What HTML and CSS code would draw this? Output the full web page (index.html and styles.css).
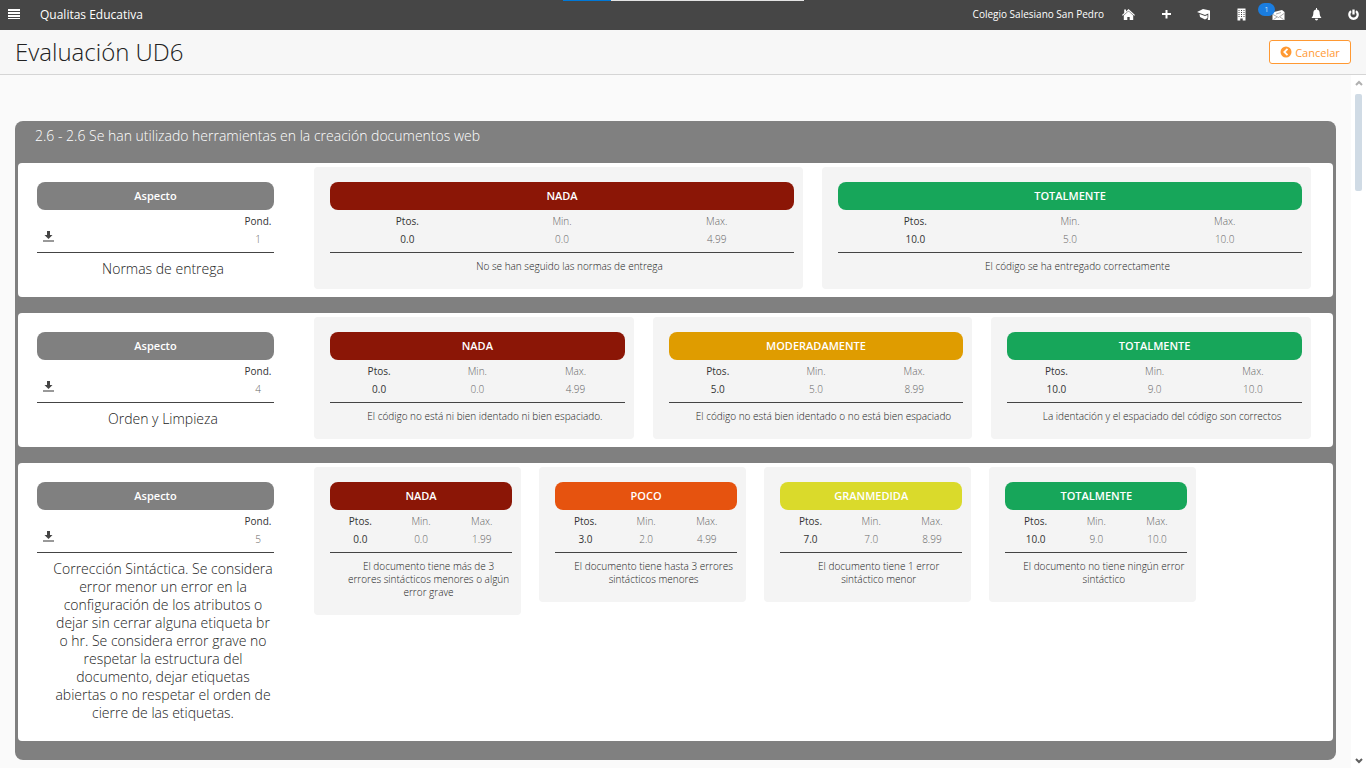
FILE: index.html
```html
<!DOCTYPE html>
<html lang="es">
<head>
<meta charset="utf-8">
<title>Evaluación UD6</title>
<link rel="stylesheet" href="styles.css">
</head>
<body>
<header class="topbar">
  <div class="loading"></div>
  <button class="icon-btn menu" aria-label="Menú"><svg viewBox="0 0 12 12"><path d="M0 1h12v2H0zM0 4h12v2H0zM0 7h12v2H0zM0 10h12v1H0z"/></svg></button>
  <span class="brand">Qualitas Educativa</span>
  <span class="school">Colegio Salesiano San Pedro</span>
  <nav class="tools">
    <button class="icon-btn" aria-label="Inicio"><svg viewBox="0 0 13 13"><path d="M6.500 1 13 7l-.8.8L6.500 2.700.8 7.800 0 7l2.200-2V1.600h1.800v1.800zM6.500 3.300l4.700 4.200V12H7.700V9H5.300v3H1.800V7.500z"/></svg></button>
    <button class="icon-btn" aria-label="Añadir"><svg viewBox="0 0 13 13"><path d="M5.500 2h2v3H11v2H7.500v3.500h-2V7H2V5h3.500z"/></svg></button>
    <button class="icon-btn" aria-label="Cursos"><svg viewBox="0 0 13 13"><path d="M0 4 6 1l7 1.500V9l.3 3h-2.600l.6-3V5.500L8 7zM2.500 6l5.500 2 2.500-1v3L8 11.500 3 9z"/></svg></button>
    <button class="icon-btn" aria-label="Centro"><svg viewBox="0 0 13 13"><path fill-rule="evenodd" d="M2.500.5h8v12H7.700v-2H5.300v2H2.500zM3.500 2v1h1V2zM6 2v1h1V2zM8.500 2v1h1V2zM3.500 4v1h1V4zM6 4v1h1V4zM8.500 4v1h1V4zM3.500 6v1h1V6zM6 6v1h1V6zM8.500 6v1h1V6zM3.500 8v1h1V8zM6 8v1h1V8zM8.500 8v1h1V8z"/></svg></button>
    <button class="icon-btn" aria-label="Mensajes"><svg viewBox="0 0 13 13"><path d="M.5 6 2 4l8-2 2.500 2v8H.5z"/><path d="m1 6.500 5.500 3L12 5.500M1.500 11.500 5 9m6.500 2.500L8 9M4 6l5-1.500" fill="none" stroke="#888" stroke-width=".7"/></svg><span class="badge">1</span></button>
    <button class="icon-btn" aria-label="Avisos"><svg viewBox="0 0 13 13"><path d="M6 0h1v1.500c2 .4 2.700 1.800 2.700 4 0 2 .8 3 1.800 4.500h-10c1-1.500 1.800-2.500 1.800-4.500 0-2.200.7-3.600 2.700-4zM5 10.700h3c0 1-.6 1.700-1.500 1.700S5 11.700 5 10.700z"/></svg></button>
    <button class="icon-btn" aria-label="Salir"><svg viewBox="0 0 13 13"><path d="M4 3.200a4.200 4.200 0 1 0 5 0M6.500 1.500v5" fill="none" stroke="#fff" stroke-width="2.300"/></svg></button>
  </nav>
</header>
<div class="titlebar">
  <h1>Evaluación UD6</h1>
  <button class="cancel"><svg viewBox="0 0 12 12"><circle cx="6" cy="6" r="5.500" fill="#ff9933"/><path d="M7.500 2.800 4.300 6l3.200 3.200" fill="none" stroke="#fff" stroke-width="1.800"/></svg>Cancelar</button>
</div>
<div class="viewport">
  <main>
    <section class="panel">
      <h2>2.6 - 2.6 Se han utilizado herramientas en la creación documentos web</h2>

      <article class="row">
        <div class="aspect">
          <div class="pill">Aspecto</div>
          <div class="weight"><button class="download" aria-label="Descargar"><svg viewBox="0 0 11 11"><path d="M4 0h3v4h2.500l-4 4-4-4H4z" fill="#444"/><path d="M0 9h11v2H0z" fill="#999"/></svg></button><dl><dt>Pond.</dt><dd>1</dd></dl></div>
          <p>Normas de entrega</p>
        </div>
        <div class="levels two">
          <div class="card"><div class="pill red">NADA</div>
            <div class="scores"><dl class="pts"><dt>Ptos.</dt><dd>0.0</dd></dl><dl><dt>Min.</dt><dd>0.0</dd></dl><dl><dt>Max.</dt><dd>4.99</dd></dl></div>
            <p>No se han seguido las normas de entrega</p></div>
          <div class="card"><div class="pill green">TOTALMENTE</div>
            <div class="scores"><dl class="pts"><dt>Ptos.</dt><dd>10.0</dd></dl><dl><dt>Min.</dt><dd>5.0</dd></dl><dl><dt>Max.</dt><dd>10.0</dd></dl></div>
            <p>El código se ha entregado correctamente</p></div>
        </div>
      </article>

      <article class="row">
        <div class="aspect">
          <div class="pill">Aspecto</div>
          <div class="weight"><button class="download" aria-label="Descargar"><svg viewBox="0 0 11 11"><path d="M4 0h3v4h2.500l-4 4-4-4H4z" fill="#444"/><path d="M0 9h11v2H0z" fill="#999"/></svg></button><dl><dt>Pond.</dt><dd>4</dd></dl></div>
          <p>Orden y Limpieza</p>
        </div>
        <div class="levels three">
          <div class="card"><div class="pill red">NADA</div>
            <div class="scores"><dl class="pts"><dt>Ptos.</dt><dd>0.0</dd></dl><dl><dt>Min.</dt><dd>0.0</dd></dl><dl><dt>Max.</dt><dd>4.99</dd></dl></div>
            <p>El código no está ni bien identado ni bien espaciado.</p></div>
          <div class="card"><div class="pill amber">MODERADAMENTE</div>
            <div class="scores"><dl class="pts"><dt>Ptos.</dt><dd>5.0</dd></dl><dl><dt>Min.</dt><dd>5.0</dd></dl><dl><dt>Max.</dt><dd>8.99</dd></dl></div>
            <p>El código no está bien identado o no está bien espaciado</p></div>
          <div class="card"><div class="pill green">TOTALMENTE</div>
            <div class="scores"><dl class="pts"><dt>Ptos.</dt><dd>10.0</dd></dl><dl><dt>Min.</dt><dd>9.0</dd></dl><dl><dt>Max.</dt><dd>10.0</dd></dl></div>
            <p>La identación y el espaciado del código son correctos</p></div>
        </div>
      </article>

      <article class="row">
        <div class="aspect">
          <div class="pill">Aspecto</div>
          <div class="weight"><button class="download" aria-label="Descargar"><svg viewBox="0 0 11 11"><path d="M4 0h3v4h2.500l-4 4-4-4H4z" fill="#444"/><path d="M0 9h11v2H0z" fill="#999"/></svg></button><dl><dt>Pond.</dt><dd>5</dd></dl></div>
          <p>Corrección Sintáctica. Se considera error menor un error en la configuración de los atributos o dejar sin cerrar alguna etiqueta br o hr. Se considera error grave no respetar la estructura del documento, dejar etiquetas abiertas o no respetar el orden de cierre de las etiquetas.</p>
        </div>
        <div class="levels four">
          <div class="card"><div class="pill red">NADA</div>
            <div class="scores"><dl class="pts"><dt>Ptos.</dt><dd>0.0</dd></dl><dl><dt>Min.</dt><dd>0.0</dd></dl><dl><dt>Max.</dt><dd>1.99</dd></dl></div>
            <p>El documento tiene más de 3 errores sintácticos menores o algún error grave</p></div>
          <div class="card"><div class="pill orange">POCO</div>
            <div class="scores"><dl class="pts"><dt>Ptos.</dt><dd>3.0</dd></dl><dl><dt>Min.</dt><dd>2.0</dd></dl><dl><dt>Max.</dt><dd>4.99</dd></dl></div>
            <p>El documento tiene hasta 3 errores sintácticos menores</p></div>
          <div class="card"><div class="pill yellow">GRANMEDIDA</div>
            <div class="scores"><dl class="pts"><dt>Ptos.</dt><dd>7.0</dd></dl><dl><dt>Min.</dt><dd>7.0</dd></dl><dl><dt>Max.</dt><dd>8.99</dd></dl></div>
            <p>El documento tiene 1 error sintáctico menor</p></div>
          <div class="card"><div class="pill green">TOTALMENTE</div>
            <div class="scores"><dl class="pts"><dt>Ptos.</dt><dd>10.0</dd></dl><dl><dt>Min.</dt><dd>9.0</dd></dl><dl><dt>Max.</dt><dd>10.0</dd></dl></div>
            <p>El documento no tiene ningún error sintáctico</p></div>
        </div>
      </article>
    </section>
  </main>
  <div class="scrollbar">
    <svg viewBox="0 0 8 6"><path d="m1 5 3-3 3 3" fill="none" stroke="#b0b0b0" stroke-width="2"/></svg>
    <div class="thumb"></div>
    <svg viewBox="0 0 8 6"><path d="m1 1 3 3 3-3" fill="none" stroke="#606060" stroke-width="2"/></svg>
  </div>
</div>
</body>
</html>
```
FILE: styles.css
```css
* { box-sizing: border-box; }
body {
  margin: 0;
  height: 100vh;
  display: flex;
  flex-direction: column;
  overflow: hidden;
  background: #fafafa;
  color: #222;
  font-family: "Open Sans", sans-serif;
  font-size: 10px;
  font-weight: 300;
}
h1, h2, p, dl, dd { margin: 0; }
button { font: inherit; cursor: pointer; }
svg { display: block; }

.topbar {
  position: relative;
  flex: none;
  display: flex;
  align-items: center;
  height: 30px;
  padding: 0 6px 2px 8px;
  background: #464646;
  color: #fff;
}
.loading {
  position: absolute;
  top: 0;
  left: 563px;
  width: 241px;
  height: 1px;
  background: linear-gradient(to right, #0078d7 20%, #e3e3e3 20%);
}
.icon-btn {
  position: relative;
  width: 13px;
  height: 13px;
  padding: 0;
  border: 0;
  background: none;
}
.icon-btn svg { width: 13px; height: 13px; fill: #fff; }
.icon-btn.menu, .icon-btn.menu svg { width: 12px; height: 12px; }
.brand { margin-left: 20px; font-size: 12px; font-weight: 400; }
.school { margin-left: auto; font-weight: 400; }
.tools {
  display: flex;
  justify-content: space-between;
  width: 238px;
  margin-left: 18px;
}
.badge {
  position: absolute;
  top: -5px;
  left: -14px;
  width: 17px;
  height: 13px;
  border-radius: 7px;
  background: #1a7de0;
  color: #fff;
  font-size: 8px;
  line-height: 12px;
}

.titlebar {
  flex: none;
  display: flex;
  align-items: center;
  justify-content: space-between;
  height: 45px;
  padding: 0 15px;
  border-bottom: 1px solid #d5d5d5;
  background: #f7f7f7;
}
h1 { font-size: 24px; font-weight: 300; line-height: 34px; }
.cancel {
  display: flex;
  align-items: center;
  justify-content: center;
  gap: 3px;
  width: 82px;
  height: 24px;
  padding: 0;
  border: 1px solid #ff9933;
  border-radius: 3px;
  background: #fff;
  color: #ff9933;
  font-size: 11px;
  font-weight: 400;
}
.cancel svg { width: 12px; height: 12px; }

.viewport { flex: 1; min-height: 0; display: flex; }
main { flex: 1; padding: 46px 15px 0; overflow: hidden; }
.scrollbar {
  display: flex;
  flex-direction: column;
  align-items: center;
  width: 15px;
  padding: 4px 0 3px;
  background: #fff;
}
.scrollbar svg { flex: none; width: 8px; height: 8px; }
.thumb { width: 7px; height: 97px; margin: 7px 0 auto; border-radius: 2px; background: #d0dbe5; }

.panel {
  display: flex;
  flex-direction: column;
  gap: 16px;
  padding: 0 3px 19px;
  border-radius: 8px;
  background: #808080;
}
h2 {
  height: 26px;
  padding: 5px 17px 0;
  color: #fff;
  font-size: 14px;
  font-weight: 300;
  line-height: 20px;
}
.row {
  display: grid;
  grid-template-columns: 237px 1fr;
  gap: 40px;
  padding: 0 22px 0 19px;
  border-radius: 4px;
  background: #fff;
}
.aspect { padding: 19px 0; }
.aspect p {
  padding: 7px 0 0 15px;
  font-size: 14px;
  line-height: 18px;
  text-align: center;
}
.pill {
  height: 28px;
  border-radius: 8px;
  background: #808080;
  color: #fff;
  font-size: 11px;
  font-weight: 600;
  line-height: 28px;
  text-align: center;
}
.red { background: #8b1606; }
.green { background: #17a65a; }
.amber { background: #df9c00; }
.orange { background: #e6530f; }
.yellow { background: #dada2b; }

.weight, .scores {
  height: 43px;
  padding-top: 2px;
  border-bottom: 1px solid #444;
  line-height: 18px;
  text-align: center;
}
.weight { display: flex; justify-content: space-between; color: #333; font-weight: 400; }
.weight dl { width: 32px; }
.weight dd { color: #666; font-weight: 300; }
.download {
  width: 11px;
  height: 11px;
  margin: 19px 0 0 6px;
  padding: 0;
  border: 0;
  background: none;
}
.levels { display: grid; align-items: start; gap: 19px; padding: 4px 0 8px; }
.two { grid-template-columns: repeat(2, 1fr); }
.three { grid-template-columns: repeat(3, 1fr); }
.four { grid-template-columns: repeat(4, 1fr); gap: 18px; width: 88.5%; }
.card { padding: 15px 9px 16px 16px; border-radius: 4px; background: #f4f4f4; }
.scores { display: grid; grid-template-columns: repeat(3, 1fr); }
.scores dl { color: #666; }
.scores .pts { color: #333; font-weight: 400; }
.card p { padding: 7px 1px 0 16px; line-height: 13px; text-align: center; }
```
